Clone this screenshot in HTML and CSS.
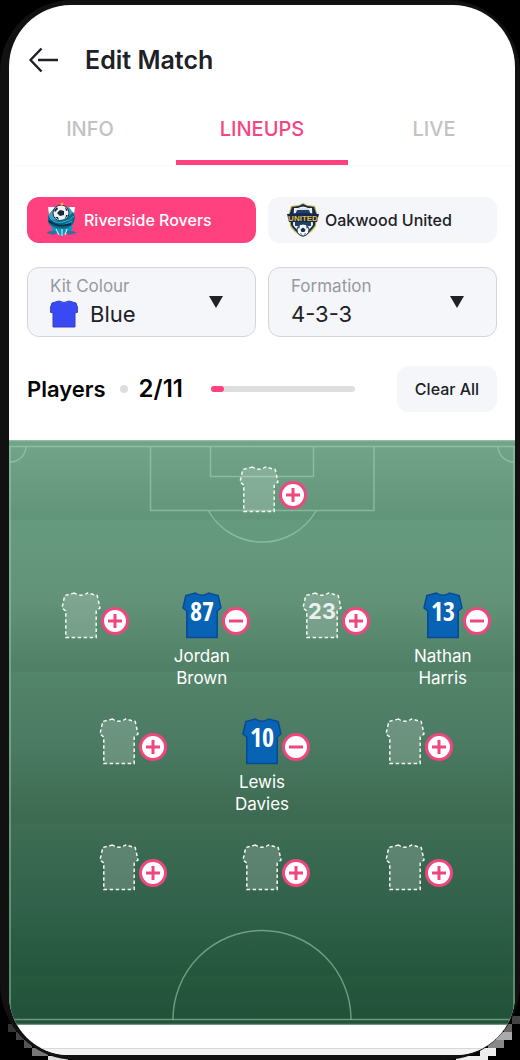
FILE: index.html
```html
<!DOCTYPE html>
<html lang="en">
<head>
<meta charset="utf-8">
<meta name="viewport" content="width=device-width, initial-scale=1">
<title>Edit Match</title>
<link rel="stylesheet" href="styles.css">
</head>
<body>
<svg class="defs" aria-hidden="true">
  <symbol id="shirt" viewBox="0 0 40 48">
    <path d="M13.5 1 L3.8 3.5 L1 16 L4.8 19 V45.5 H35.2 V19 L39 16 L36.2 3.5 L26.5 1 Q20 5.5 13.5 1 Z"/>
  </symbol>
  <symbol id="plus" viewBox="0 0 28 28">
    <circle cx="14" cy="14" r="12.5"/><path d="M7 14 H21 M14 7 V21"/>
  </symbol>
  <symbol id="minus" viewBox="0 0 28 28">
    <circle cx="14" cy="14" r="12.5"/><path d="M7 14 H21"/>
  </symbol>
</svg>
<div class="phone">
<svg class="corner left" viewBox="0 0 72 44" aria-hidden="true">
  <path fill="#333" d="M8 8 h8 v8 h-8 Z"/><path fill="#444" d="M16 16 h8 v8 h-8 Z"/><path fill="#555" d="M24 24 h8 v8 h-8 Z"/><path fill="#777" d="M32 32 h16 v8 h-16 Z"/><path fill="#ddd" d="M48 40 h20 v4 h-20 Z"/>
</svg>
<svg class="corner right" viewBox="0 0 72 44" aria-hidden="true">
  <path fill="#444" d="M64 0 h8 v8 h-8 Z"/><path fill="#666" d="M56 8 h8 v8 h-8 Z"/><path fill="#aaa" d="M48 16 h16 v8 h-16 Z"/><path fill="#888" d="M40 24 h16 v8 h-16 Z"/><path fill="#eee" d="M32 32 h16 v8 h-16 Z M8 40 h32 v4 h-32 Z"/>
</svg>
<main class="screen">
  <header class="topbar">
    <button class="back" aria-label="Back">
      <svg width="30" height="26" viewBox="0 0 30 26"><path d="M12.500 1.500 L1.500 13 L12.500 24.500 M9 13 H29"/></svg>
    </button>
    <h1>Edit Match</h1>
  </header>
  <nav class="tabs">
    <a class="tab" href="#info">INFO</a>
    <a class="tab active" href="#lineups" aria-current="page">LINEUPS</a>
    <a class="tab" href="#live">LIVE</a>
  </nav>
  <div class="controls">
    <div class="pair">
      <button class="team selected">
        <svg class="crest" viewBox="0 0 32 36">
          <path d="M2 5 H29 L27 21 Q24 28 16 34 Q7 29 4 21 Z" fill="#3fa3c6"/>
          <path d="M2 5 H9 L3 12 Z M23 5 H29 L28 12 Z" fill="#f5fcff"/>
          <circle cx="15" cy="11" r="8" fill="#eef1f3" stroke="#18364a" stroke-width="1"/>
          <path d="M14 8 L18 9 L18 13 L14 14 L11 11 Z M8 8 L11 5 L12 7 L9 10 Z M19 5 L22 8 L20 9 Z M9 15 L12 15 L13 18 Z M20 13 L22 13 L19 17 Z" fill="#172a38"/>
          <path d="M2 13 Q5 20 14 18 Q21 17 27 10 Q30 14 28 20 Q25 27 17 27 Q5 27 2 20 Z" fill="#08698d"/>
          <path d="M4 16 Q9 22 17 20 Q24 19 28 14 M6 21 Q16 26 26 19" fill="none" stroke="#35b3c9" stroke-width="1"/>
          <path d="M3 19 Q12 26 25 22" fill="none" stroke="#0b304d" stroke-width="2"/>
          <path d="M5 24 L12 27 H19 L27 24 L25 31 L20 28 L16 35 L11 29 L7 31 Z" fill="#0c98bd"/>
          <path d="M0 31 Q6 27 12 30 L8 33 Q4 32 0 31 M19 30 Q25 27 31 31 L23 33 Z" fill="#356f9b"/>
          <path d="M10 27 L13 33 M16 27 V34 M21 27 L19 33" stroke="#e5fafe" stroke-width="1"/>
          <circle cx="16" cy="2" r="1.500" fill="#ffb331"/>
        </svg>
        <span>Riverside Rovers</span>
      </button>
      <button class="team">
        <svg class="crest" viewBox="0 0 32 36">
          <path d="M16 1 L20 3 L28 4 L30 11 L29 24 Q25 31 16 35 Q7 31 3 24 L2 11 L4 4 L12 3 Z" fill="#c5ad40"/>
          <path d="M16 2 L20 4 L27 5 L29 11 L28 23 Q24 30 16 34 Q8 30 4 23 L3 11 L5 5 L12 4 Z" fill="#13284c"/>
          <path d="M11 6 Q16 3 21 6 H25 L26 23 Q22 29 16 31 Q10 29 6 23 L7 6 Z" fill="#e9eef4"/>
          <path d="M10 8 H22 L24 13 V24 H8 V13 Z" fill="#213f6b"/>
          <path d="M12 7 H21" stroke="#d8e1ed" stroke-width="2"/>
          <circle cx="16" cy="28" r="6" fill="#f7f9fb" stroke="#17325a" stroke-width="1"/>
          <path d="M16 25.500 L18.500 27.500 L17.500 30 H14.500 L13.500 27.500 Z M11 25 L13 24 L12 27 Z M21 25 L19 24 L20 27 Z M13 32 L14 31 L15 33 Z M19 32 L18 31 L17 33 Z" fill="#17325a"/>
          <path d="M0 12 Q16 10 32 12 L30 20 H2 Z" fill="#17294b"/>
          <text class="crest-text" x="16" y="19" text-anchor="middle">UNITED</text>
        </svg>
        <span>Oakwood United</span>
      </button>
    </div>
    <div class="pair">
      <div class="field">
        <label for="kit">Kit Colour</label>
        <div class="value">
          <svg class="kit" viewBox="0 0 28 28"><path d="M9 1 L2 3 Q0 7 0 12 L3 13 V27 H25 V13 L28 12 Q28 7 26 3 L19 1 Q14 4 9 1 Z"/></svg>
          <select id="kit"><option>Blue</option></select>
        </div>
        <svg class="arrow" viewBox="0 0 14 12"><path d="M0 0 H14 L7 12 Z"/></svg>
      </div>
      <div class="field">
        <label for="formation">Formation</label>
        <div class="value"><select id="formation"><option>4-3-3</option></select></div>
        <svg class="arrow" viewBox="0 0 14 12"><path d="M0 0 H14 L7 12 Z"/></svg>
      </div>
    </div>
    <div class="summary">
      <h2 id="players">Players</h2>
      <span class="dot"></span>
      <span class="count">2/11</span>
      <progress value="1" max="11" aria-labelledby="players"></progress>
      <button class="clear">Clear All</button>
    </div>
  </div>
  <section class="pitch" aria-label="Lineup">
    <svg class="markings" viewBox="0 0 506 585" preserveAspectRatio="none" aria-hidden="true">
      <path d="M1 6.500 V579.500 M505 6.500 V579.500 M0 6.500 H506 M0 579.500 H506 M0 .5 H506 M0 584.500 H506"/>
      <path d="M17 7 A16 16 0 0 1 1 22 M489 7 A16 16 0 0 0 505 22"/>
      <path d="M141.500 7 V70.500 H365 V7 M201.500 7 V36.500 H304.500 V7"/>
      <path d="M199.500 71 A62 62 0 0 0 307 71"/>
      <path d="M164 579.500 A89 89 0 0 1 342 579.500"/>
    </svg>
    <div class="line keeper">
      <div class="player empty"><svg class="shirt"><use href="#shirt"/></svg><button class="action" aria-label="Add goalkeeper"><svg><use href="#plus"/></svg></button></div>
    </div>
    <div class="line four">
      <div class="player empty"><svg class="shirt"><use href="#shirt"/></svg><button class="action" aria-label="Add player"><svg><use href="#plus"/></svg></button></div>
      <div class="player"><svg class="shirt"><use href="#shirt"/><text x="20" y="29">87</text></svg><button class="action" aria-label="Remove Jordan Brown"><svg><use href="#minus"/></svg></button><p>Jordan<br>Brown</p></div>
      <div class="player empty"><svg class="shirt"><use href="#shirt"/><text x="20" y="27">23</text></svg><button class="action" aria-label="Add player 23"><svg><use href="#plus"/></svg></button></div>
      <div class="player"><svg class="shirt"><use href="#shirt"/><text x="20" y="29">13</text></svg><button class="action" aria-label="Remove Nathan Harris"><svg><use href="#minus"/></svg></button><p>Nathan<br>Harris</p></div>
    </div>
    <div class="line three">
      <div class="player empty"><svg class="shirt"><use href="#shirt"/></svg><button class="action" aria-label="Add player"><svg><use href="#plus"/></svg></button></div>
      <div class="player"><svg class="shirt"><use href="#shirt"/><text x="20" y="29">10</text></svg><button class="action" aria-label="Remove Lewis Davies"><svg><use href="#minus"/></svg></button><p>Lewis<br>Davies</p></div>
      <div class="player empty"><svg class="shirt"><use href="#shirt"/></svg><button class="action" aria-label="Add player"><svg><use href="#plus"/></svg></button></div>
    </div>
    <div class="line three">
      <div class="player empty"><svg class="shirt"><use href="#shirt"/></svg><button class="action" aria-label="Add player"><svg><use href="#plus"/></svg></button></div>
      <div class="player empty"><svg class="shirt"><use href="#shirt"/></svg><button class="action" aria-label="Add player"><svg><use href="#plus"/></svg></button></div>
      <div class="player empty"><svg class="shirt"><use href="#shirt"/></svg><button class="action" aria-label="Add player"><svg><use href="#plus"/></svg></button></div>
    </div>
  </section>
  <footer class="bottom"></footer>
</main>
</div>
</body>
</html>
```
FILE: styles.css
```css
* { box-sizing: border-box; }

body {
  margin: 0;
  background: #000;
  color: #202126;
  font-family: Inter, "Liberation Sans", sans-serif;
}

button, select { font: inherit; color: inherit; }
button { border: 0; padding: 0; background: none; cursor: pointer; }
h1, h2, p { margin: 0; }
.defs { position: absolute; width: 0; height: 0; }

.phone {
  position: relative;
  display: flex;
  min-height: 100vh;
  padding: 5px 5px 5px 9px;
  background: #111;
  border-radius: 72px 72px 76px 76px;
}

/* Stepped light behind the lower corners of the frame */
.corner { position: absolute; z-index: -1; bottom: 0; width: 72px; height: 44px; }
.corner.left { left: 0; }
.corner.right { right: 0; }

.screen {
  display: flex;
  flex: 1;
  flex-direction: column;
  min-width: 0;
  overflow: hidden;
  background: #fff;
  border-radius: 62px 62px 60px 60px;
}

.topbar {
  display: flex;
  align-items: center;
  gap: 26px;
  padding: 39px 20px 0;
}
.back { display: flex; }
.back svg { fill: none; stroke: #202126; stroke-width: 2.5; stroke-linejoin: round; }
h1 { font-size: 25px; line-height: 32px; font-weight: 600; }

.tabs {
  display: flex;
  margin: 20px -5px 0;
  border-bottom: 1px solid #fafafa;
}
.tab {
  flex: 1;
  padding: 21px 0 18px;
  border-bottom: 5px solid transparent;
  color: #c2c2c4;
  font-size: 20px;
  line-height: 25px;
  font-weight: 500;
  text-align: center;
  text-decoration: none;
}
.tab.active { border-color: #ff427e; color: #f54480; }

.controls { padding: 31px 18px 28px; }
.pair {
  display: grid;
  grid-template-columns: 1fr 1fr;
  gap: 12px;
  margin-bottom: 24px;
}
.team {
  display: flex;
  align-items: center;
  gap: 6px;
  height: 46px;
  padding: 0 19px;
  border-radius: 12px;
  background: #f5f6fa;
  font-size: 16px;
  font-weight: 500;
  white-space: nowrap;
}
.team.selected { background: #ff417f; color: #fff; }
.crest { flex: none; width: 32px; height: 36px; }
.crest-text { fill: #e1bd43; font: bold 8px "Liberation Sans", sans-serif; }

.field {
  display: grid;
  grid-template-columns: 1fr 14px;
  align-items: center;
  height: 70px;
  padding: 5px 32px 7px 22px;
  border: 1px solid #d4d5d6;
  border-radius: 12px;
  background: #f5f6fa;
}
.field label { color: #98999d; font-size: 17px; line-height: 24px; }
.value { display: flex; grid-row: 2; align-items: center; gap: 12px; }
.value select {
  flex: 1;
  min-width: 0;
  padding: 0;
  border: 0;
  background: none;
  appearance: none;
  font-size: 22px;
  line-height: 30px;
}
.kit { width: 28px; height: 28px; fill: #3949f4; stroke: #3541c6; }
.arrow { grid-area: 1 / 2 / 3 / 3; width: 14px; height: 12px; margin-top: 2px; fill: #202126; }

.summary { display: flex; align-items: center; margin-top: 29px; color: #050506; }
h2 { font-size: 22px; line-height: 28px; font-weight: 600; }
.count { font-size: 24px; line-height: 28px; font-weight: 600; }
.dot { width: 8px; height: 8px; margin: 0 11px 0 14px; border-radius: 50%; background: #dedede; }
progress {
  appearance: none;
  flex: 0 1 144px;
  min-width: 0;
  height: 6px;
  margin: 0 16px 0 28px;
  border: 0;
}
progress::-webkit-progress-bar { border-radius: 3px; background: #dedede; }
progress::-webkit-progress-value { border-radius: 3px; background: #ff427e; }
.clear {
  width: 100px;
  height: 46px;
  margin-left: auto;
  border-radius: 12px;
  background: #f5f6fa;
  color: #202126;
  font-size: 16px;
  font-weight: 500;
}

.pitch {
  position: relative;
  display: grid;
  grid-auto-rows: 126px;
  padding: 26px 0 55px;
  background:
    repeating-linear-gradient(rgba(0, 30, 15, 0) 0 6px, rgba(0, 30, 15, .05) 79px, rgba(0, 30, 15, 0) 80px 152px),
    linear-gradient(#72a489, #669a7e 14%, #629379 27%, #55876c 38%, #4c7c63 50%, #3e6d54 66%, #31614a 80%, #275a40 90%, #225038);
}
.markings { position: absolute; inset: 0; width: 100%; height: 100%; fill: none; stroke: #a5d6b7; stroke-opacity: .55; stroke-width: 1.5; }
.line { display: grid; justify-items: center; align-items: start; }
.keeper { padding-right: 6px; }
.four { grid-template-columns: repeat(4, 1fr); padding: 0 12px; }
.three { grid-template-columns: repeat(3, 1fr); padding: 0 38px; }

.player { position: relative; width: 40px; }
.shirt { display: block; width: 40px; height: 48px; fill: #0863b5; stroke: #074b92; stroke-width: 1.5; }
.shirt text { fill: #fff; stroke: none; font: bold 26px "Liberation Sans Narrow", "Open Sans Condensed", "Roboto Condensed", Roboto, sans-serif; text-anchor: middle; }
.empty .shirt { fill: rgba(255, 255, 255, .18); stroke: #f2faf5; stroke-dasharray: 3.5 2.5; }
.empty .shirt text { fill: #e9f1ec; font: bold 22px Inter, sans-serif; }
.action { position: absolute; left: 100%; top: 15px; width: 28px; height: 28px; }
.action svg { display: block; width: 28px; height: 28px; fill: #fff; stroke: #f0467f; stroke-width: 3; }
.player p {
  display: flex;
  justify-content: center;
  margin-top: 5px;
  color: #fff;
  font-size: 17px;
  line-height: 22px;
  text-align: center;
}

.bottom { flex: 1; min-height: 30px; border-bottom: 6px solid #f3f3f3; box-shadow: inset 0 -1px #d8d8d8; }
```
